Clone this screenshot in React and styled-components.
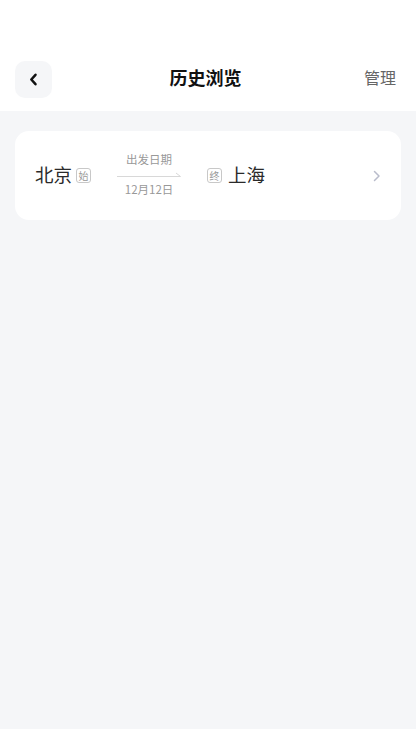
import React from "react";
import styled, { createGlobalStyle } from "styled-components";

const Global = createGlobalStyle`
  html, body { margin: 0; padding: 0; background: #f5f6f8; }
  body { font-family: "Noto Sans CJK SC", "Noto Sans", sans-serif; }
  #root { min-height: 729px; background: #f5f6f8; }
`;

const Page = styled.div`
  width: 416px;
  min-height: 729px;
  background: #f5f6f8;
  display: flex;
  flex-direction: column;
`;

const Header = styled.header`
  background: #fff;
  height: 111px;
  box-sizing: border-box;
  padding: 61px 20px 0 15px;
  display: grid;
  grid-template-columns: 37px 1fr 37px;
  align-items: start;
`;

const BackButton = styled.button`
  width: 37px;
  height: 37px;
  border: none;
  border-radius: 10px;
  background: #f5f6f8;
  display: flex;
  align-items: center;
  justify-content: center;
  padding: 0;
`;

const Title = styled.h1`
  margin: 0;
  height: 37px;
  line-height: 33px;
  text-align: center;
  font-size: 18px;
  font-weight: 700;
  color: #111;
`;

const Manage = styled.span`
  height: 37px;
  line-height: 33px;
  font-size: 16px;
  color: #666;
  white-space: nowrap;
  justify-self: end;
`;

const List = styled.main`
  padding: 20px 15px;
`;

const Card = styled.div`
  height: 89px;
  background: #fff;
  border-radius: 14px;
  display: flex;
  align-items: center;
  padding: 0 20px 0 20px;
  box-sizing: border-box;
`;

const City = styled.span`
  font-size: 18.5px;
  color: #2a2a2a;
  line-height: 1;
  margin-top: -3px;
`;

const Tag = styled.span`
  box-sizing: border-box;
  width: 15px;
  height: 15px;
  border: 1px solid #c8c8c8;
  border-radius: 3px;
  font-size: 10px;
  line-height: 13px;
  text-align: center;
  color: #999;
  margin: ${(p) => p.$margin};
`;

const Middle = styled.div`
  width: 64px;
  margin: 0 26px 0 26px;
  display: flex;
  flex-direction: column;
  align-items: center;
  gap: 5px;
  margin-top: -3px;
`;

const Small = styled.span`
  font-size: 11.5px;
  color: #999;
  line-height: 14px;
  white-space: nowrap;
`;

const Arrow = styled.svg`
  display: block;
`;

const Spacer = styled.div`
  flex: 1;
`;

export default function App() {
  return (
    <Page>
      <Global />
      <Header>
        <BackButton aria-label="back">
          <svg width="9" height="13" viewBox="0 0 9 13">
            <path d="M6.5 1.8 L2.3 6.5 L6.5 11.2" fill="none" stroke="#111" strokeWidth="2.5" strokeLinecap="round" strokeLinejoin="round" />
          </svg>
        </BackButton>
        <Title>历史浏览</Title>
        <Manage>管理</Manage>
      </Header>
      <List>
        <Card>
          <City>北京</City>
          <Tag $margin="0 0 0 4px">始</Tag>
          <Middle>
            <Small>出发日期</Small>
            <Arrow width="64" height="6" viewBox="0 0 64 6">
              <path d="M0 5.5 H63.5 L59 2" fill="none" stroke="#d8d8d8" strokeWidth="1" />
            </Arrow>
            <Small>12月12日</Small>
          </Middle>
          <Tag $margin="0 6px 0 0">终</Tag>
          <City>上海</City>
          <Spacer />
          <svg width="8" height="12" viewBox="0 0 8 12">
            <path d="M1.5 1.5 L6 6 L1.5 10.5" fill="none" stroke="#b9bccb" strokeWidth="1.5" strokeLinecap="round" strokeLinejoin="round" />
          </svg>
        </Card>
      </List>
    </Page>
  );
}
